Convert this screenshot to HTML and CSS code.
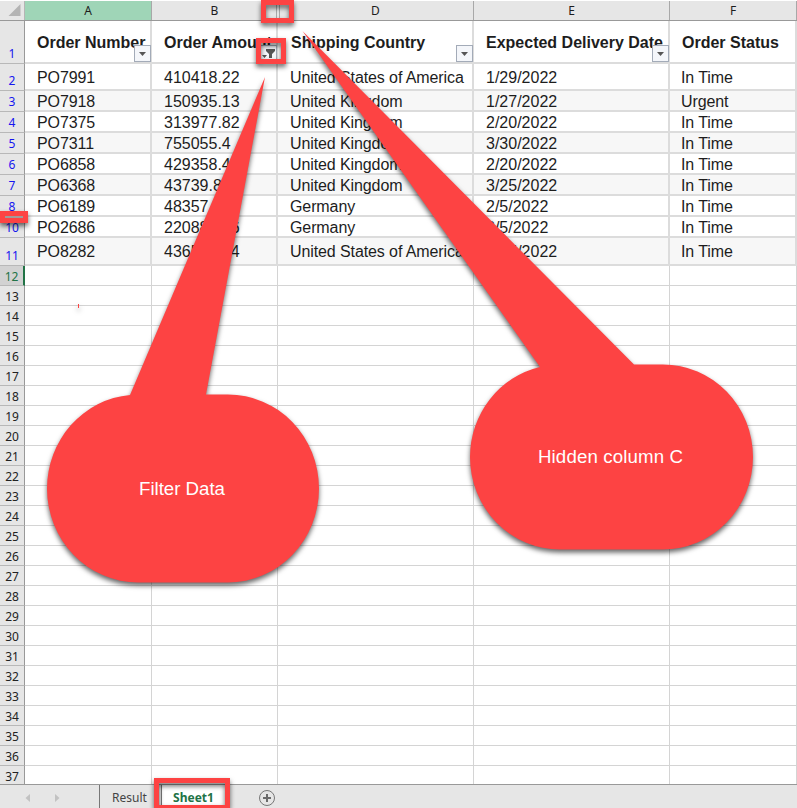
FILE: index.html
```html
<!DOCTYPE html>
<html lang="en">
<head>
<meta charset="utf-8">
<title>Sheet1</title>
<link rel="stylesheet" href="styles.css">
</head>
<body>
<main class="window">
  <div class="letters">
    <div class="corner"><svg width="13" height="13" viewBox="0 0 13 13"><path d="M12.5 0V12H0.5Z" fill="#b4b4b4"/></svg></div>
    <div class="letter selected">A</div>
    <div class="letter before-hidden">B</div>
    <div class="letter after-hidden">D</div>
    <div class="letter">E</div>
    <div class="letter">F</div>
  </div>
  <div class="grid" id="grid"></div>
  <footer class="tabs">
    <svg class="arrows" width="99" height="23" viewBox="0 0 99 23"><path d="M30 9v8l-4.500-4zM55 9v8l4.500-4z" fill="#c2c2c2"/></svg>
    <div class="tab">Result</div>
    <div class="tab active">Sheet1</div>
    <svg class="add" width="18" height="18" viewBox="0 0 18 18"><circle cx="9" cy="9" r="7.500" fill="none" stroke="#777"/><path d="M5 9h8M9 5v8" stroke="#6b6b6b" stroke-width="2"/></svg>
  </footer>
  <svg class="notes" width="797" height="808" viewBox="0 0 797 808">
    <g class="shadowed">
      <path d="M265 77L206 394.500H228A91 94 0 0 1 228 582.500H138A91 94 0 0 1 47 488.500A91 94 0 0 1 130 395Z"/>
      <path d="M302.500 31L634 364.500H663A90 92.500 0 0 1 663 549.500H560A90 92.500 0 0 1 470 457A90 92.500 0 0 1 540 367Z"/>
      <path fill-rule="evenodd" d="M261 0H294V23H261ZM266 5V18H289V5Z"/>
      <path fill-rule="evenodd" d="M256 38H286V64H256ZM261 43V59H281V43Z"/>
      <path fill-rule="evenodd" d="M154 778H230V808H154ZM159 783V805H225V783Z"/>
      <path d="M0 211H28V223H0Z"/>
      <path d="M78 304h1v4h-1z"/>
    </g>
    <path d="M5 216h18v2H5z" fill="#a09a9a"/>
    <text x="139" y="495" textLength="86">Filter Data</text>
    <text x="538" y="463" textLength="145">Hidden column C</text>
  </svg>
</main>
<script src="script.js"></script>
</body>
</html>
```

FILE: styles.css
```css
* { box-sizing: border-box; }
body { margin: 0; }
.window {
  position: relative;
  width: 797px;
  height: 808px;
  overflow: hidden;
  display: flex;
  flex-direction: column;
  background: #fff;
  font-family: "Liberation Sans", Arial, sans-serif;
  color: #1d1d1d;
}
.letters, .row {
  display: grid;
  grid-template-columns: 25px 127px 126px 196px 196px 127px;
  flex: none;
}
.letters {
  height: 21px;
  background: #e6e6e6;
  border-top: 1px solid #fff;
  border-bottom: 1px solid #999;
  font: 12px/19px "Noto Sans", sans-serif;
  text-align: center;
}
.corner { border-right: 1px solid #b5b5b5; padding: 3px 3px 0 8px; line-height: 0; }
.letter { border-right: 1px solid #a8a8a8; }
.letter.selected { background: #9fd5b7; }
.before-hidden { margin-right: 1px; padding-left: 1px; }
.after-hidden { border-left: 1px solid #a8a8a8; margin-left: 1px; padding-right: 2px; }
.grid { height: 763px; overflow: hidden; flex: none; }
.row { height: 20px; }
.num {
  display: flex;
  align-items: flex-end;
  justify-content: center;
  background: #e6e6e6;
  border-right: 1px solid #999;
  border-bottom: 1px solid #b8b8b8;
  font: 12px/17px "Noto Sans", sans-serif;
  color: #222;
}
.num.filtered { color: #1515f0; line-height: 18px; }
.num.current { color: #217346; background: #d2d2d2; border-right: 2px solid #217346; }
.cell {
  position: relative;
  display: flex;
  align-items: center;
  min-width: 0;
  padding: 1px 0 0 12px;
  border-right: 1px solid #d4d4d4;
  border-bottom: 1px solid #d4d4d4;
  font-size: 16px;
  line-height: 16px;
  letter-spacing: -0.1px;
  white-space: nowrap;
}
.data .cell { border-right: 2px solid #dcdcdc; border-bottom: 2px solid #dcdcdc; padding-top: 2px; }
.banded .cell { background: #f7f7f7; }
.data .cell:nth-child(3), .data .cell:nth-child(5) { letter-spacing: 0; }
.data .cell:last-child { padding-left: 11px; }
.head { font-weight: bold; }
.head .cell, .head .cell:last-child { padding-left: 12px; letter-spacing: 0; }
.head .cell:nth-child(4) { padding-left: 13px; }
.filter {
  position: absolute;
  right: -1px;
  bottom: 0;
  width: 17px;
  height: 17px;
}
.tabs {
  height: 24px;
  flex: none;
  display: flex;
  background: #e6e6e6;
  border-top: 1px solid #999;
  font: 12px/25px "Noto Sans", sans-serif;
  color: #444;
}
.arrows { flex: none; }
.tab { width: 62px; text-align: center; border-left: 1px solid #777; padding-right: 2px; }
.tab.active { width: 65px; background: #fff; color: #217346; font-weight: bold; padding-right: 1px; }
.add { margin: 4px 0 0 32px; }
.notes { position: absolute; left: 0; top: 0; fill: #fd4343; pointer-events: none; }
.shadowed { filter: drop-shadow(0 3px 2.5px rgba(0, 0, 0, .6)); }
.notes text { fill: #fff; font-size: 18.700px; }
```

FILE: script.js
```javascript
const titles = ["Order Number", "Order Amount", "Shipping Country", "Expected Delivery Date", "Order Status"];
const rows = [
  [1, 43, titles],
  [2, 27, ["PO7991", "410418.22", "United States of America", "1/29/2022", "In Time"]],
  [3, 21, ["PO7918", "150935.13", "United Kingdom", "1/27/2022", "Urgent"]],
  [4, 21, ["PO7375", "313977.82", "United Kingdom", "2/20/2022", "In Time"]],
  [5, 21, ["PO7311", "755055.4", "United Kingdom", "3/30/2022", "In Time"]],
  [6, 21, ["PO6858", "429358.4", "United Kingdom", "2/20/2022", "In Time"]],
  [7, 21, ["PO6368", "43739.8", "United Kingdom", "3/25/2022", "In Time"]],
  [8, 21, ["PO6189", "48357.6", "Germany", "2/5/2022", "In Time"]],
  [10, 21, ["PO2686", "220886.16", "Germany", "2/5/2022", "In Time"]],
  [11, 28, ["PO8282", "436508.14", "United States of America", "1/25/2022", "In Time"]],
];
for (let n = 12; n <= 37; n++) rows.push([n, 20, ["", "", "", "", ""]]);

const arrow = '<path d="M5 7h7L8.500 11z" fill="#555"/>';
const funnel = '<path d="M6 4h9v2l-3 3v4h-3V9L6 6zM2 10h5l-2.500 3z" fill="#555"/>';
const button = (glyph) =>
  `<svg class="filter" viewBox="0 0 17 17"><rect x=".5" y=".5" width="16" height="16" fill="#f4f6fa" stroke="#a3abb8"/>${glyph}</svg>`;

document.getElementById("grid").innerHTML = rows.map(([n, height, values]) => {
  const kind = n > 11 ? "" : n === 1 ? "data head" : [3, 5, 7, 11].includes(n) ? "data banded" : "data";
  const mark = n === 12 ? "current" : n < 12 ? "filtered" : "";
  const cells = values.map((v, i) =>
    `<div class="cell">${v}${n === 1 && i < 4 ? button(i === 1 ? funnel : arrow) : ""}</div>`).join("");
  return `<div class="row ${kind}" style="height:${height}px"><div class="num ${mark}">${n}</div>${cells}</div>`;
}).join("");
```
